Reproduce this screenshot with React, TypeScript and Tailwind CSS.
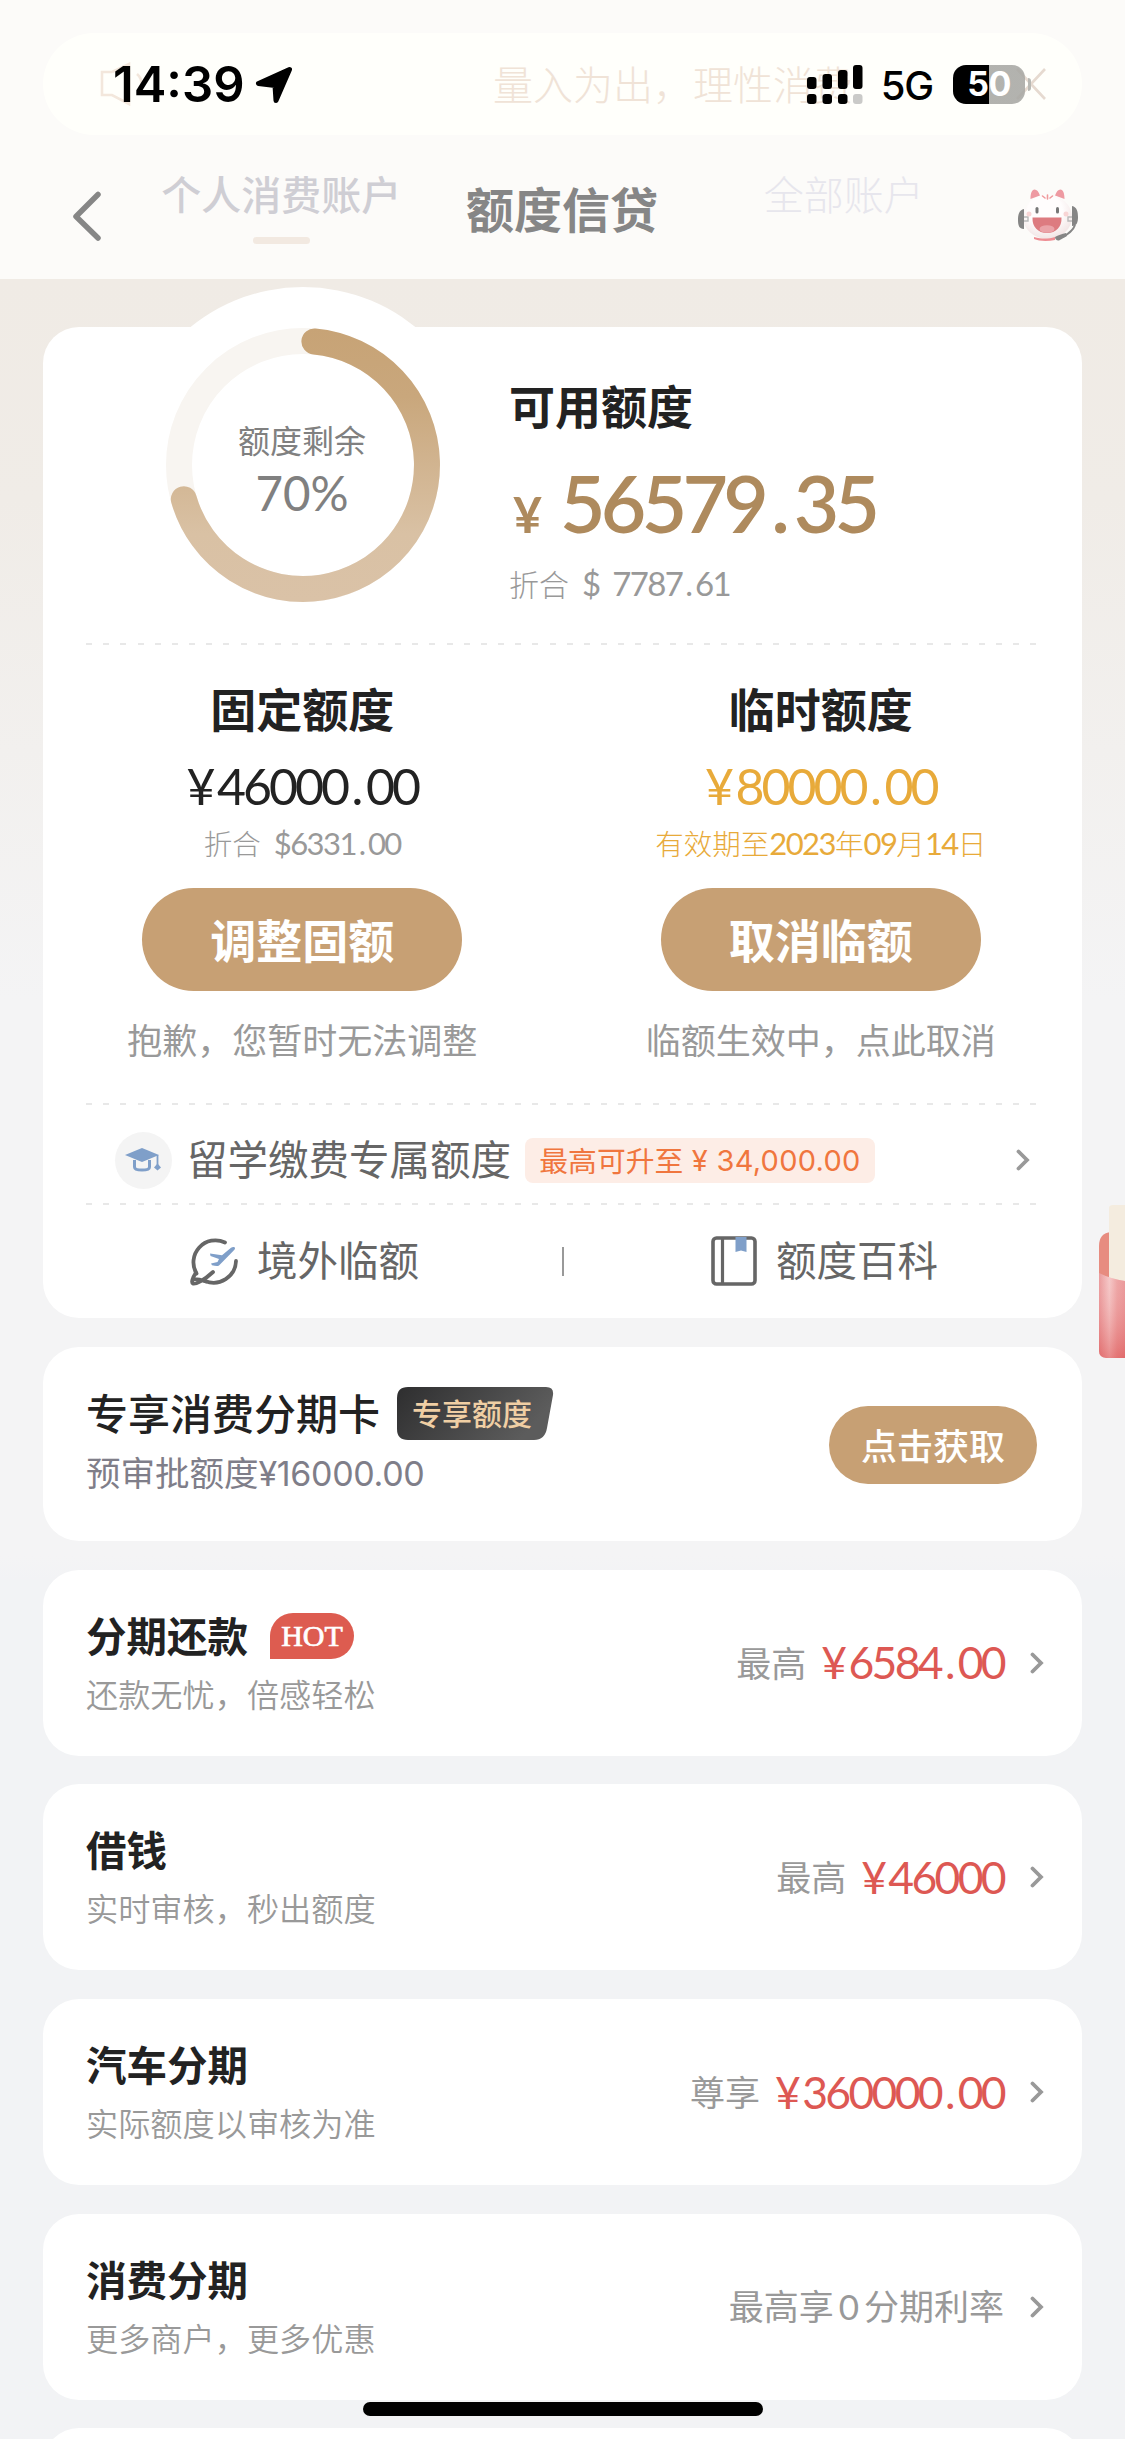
import React from 'react';
import clsx from 'clsx';

interface MoneyProps {
  value: string;
  className?: string;
  tracking?: string;
}

// Digits are set tight, with extra room after the currency sign and around the decimal point.
const Money: React.FC<MoneyProps> = ({ value, className, tracking = 'tracking-[-0.06em]' }) => {
  const hasYen = value.length > 1 && value.startsWith('¥');
  const [whole, fraction] = (hasYen ? value.slice(1) : value).split('.');
  return (
    <span className={clsx("font-['Lato','Noto_Sans_CJK_SC',sans-serif]", tracking, className)}>
      {hasYen && <span className="mr-[0.09em]">¥</span>}
      {whole}
      {fraction && <span className="ml-[0.09em] mr-[0.11em]">.</span>}
      {fraction}
    </span>
  );
};

const Chevron = () => (
  <svg className="h-[22px] w-[14px]" viewBox="0 0 14 22" fill="none">
    <path d="M2.5 2.5 11 11l-8.5 8.5" stroke="#999" strokeWidth="3.8" strokeLinecap="round" />
  </svg>
);

const Dashes = () => (
  <div className="mx-[43px] h-[2px] bg-[repeating-linear-gradient(90deg,#e8e8e8_0_6px,transparent_6px_17.17px)]" />
);

const CatIcon = () => (
  <svg className="h-[52px] w-[62px]" viewBox="0 0 62 52">
    <defs>
      <radialGradient id="face" cx="0.45" cy="0.35" r="0.7">
        <stop offset="0.5" stopColor="#fffdfd" />
        <stop offset="1" stopColor="#efe0e0" />
      </radialGradient>
    </defs>
    <path d="M13.500 10c0-6 1.500-9.500 4-9.500s4 2 5.500 6zM47.500 10c0-6-1.500-9.500-4-9.500s-4 2-5.500 6z" fill="#ee9aa2" />
    <ellipse cx="30.500" cy="28" rx="24.500" ry="22" fill="url(#face)" />
    <path d="M25.500 7l2.500 2M30.500 6v4M35.500 7l-2.500 2" stroke="#ef9a9c" strokeWidth="1.600" strokeLinecap="round" />
    <path d="M7 20C2 21 1 26 1 31s1 9 6 9zM55 17c5 1 6 6 6 11s-1 9-6 9z" fill="#858585" />
    <path d="M7 28h4v4H7M55 28h-4v4h4" fill="none" stroke="#b9b9b9" strokeWidth="1.4" />
    <path d="M58 36c-2 6-7 9-12 12" fill="none" stroke="#858585" strokeWidth="2" />
    <path d="M38 48c3-2 7-3 11-4l1 3-8 4.500c-2 .5-4-1-4-3.500z" fill="#858585" />
    <path d="M17 48c8 2 14 2 21 0v3c-7 1.300-16 1.300-21-1z" fill="#ee8d93" />
    <rect x="18.500" y="18" width="3" height="6.500" rx="1.500" fill="#777" />
    <rect x="39" y="18" width="3" height="6.500" rx="1.500" fill="#777" />
    <path d="M15.500 28.500h29C45 38 39 44 30 44s-15-6-14.500-15.500z" fill="#dd7b80" />
    <ellipse cx="30" cy="40" rx="7.500" ry="3.800" fill="#eaa3a8" />
    <circle cx="12" cy="25" r="2.500" fill="#f8d5d5" />
    <circle cx="49" cy="25" r="2.500" fill="#f8d5d5" />
  </svg>
);

const GraduationIcon = () => (
  <svg className="h-[24px] w-[37px]" viewBox="0 0 37 24">
    <path d="M0 7 17 0l17 7-17 7z" fill="#7f9fc9" />
    <path d="M9.500 12v7c0 2 2.500 3 7.500 3s7.500-1 7.500-3v-7" fill="none" stroke="#7f9fc9" strokeWidth="3" />
    <path d="M32.500 7v10" stroke="#7f9fc9" strokeWidth="1.800" />
    <path d="m32.500 15.500 3.500 4-3.500 3-3.500-3z" fill="#7f9fc9" />
  </svg>
);

const PlaneIcon = () => (
  <svg className="h-[50px] w-[48px]" viewBox="0 0 48 50" fill="none">
    <path d="M35 6.500A22 22 0 0 0 6.500 37.500" stroke="#666" strokeWidth="3.800" strokeLinecap="round" />
    <path d="M46 25A22.500 22.500 0 0 1 15 45" stroke="#666" strokeWidth="3.800" strokeLinecap="round" />
    <path d="M6 36.500c-3.500 5.500-5 10-3 11s11-3 20-11.500M3 43.500c3-1 8 .5 13 2" stroke="#666" strokeWidth="3.800" strokeLinecap="round" strokeLinejoin="round" />
    <path d="m20 17.500 12 1.800 9-7.500c1.500-1.300 4.500-1.300 4 .8-.3 1.200-1 1.800-2 2.700L29 29.500c-1.500 1-4 .5-7-.2l-1-1.700 6.500-1.500 1.500-3-8.500-3z" fill="#7f9fc9" />
  </svg>
);

const BookIcon = () => (
  <svg className="h-[50px] w-[46px]" viewBox="0 0 46 50" fill="none">
    <rect x="2" y="2" width="42" height="46" rx="3.500" stroke="#666" strokeWidth="3.600" />
    <path d="M11.500 2v46" stroke="#666" strokeWidth="3.200" />
    <path d="M24.500 1h11v15l-5.500-1.500-5.500 1.500z" fill="#7f9fc9" />
  </svg>
);

const StatusBar = () => (
  <div className="relative flex h-[64px] items-center justify-between pl-[113px] pr-[94px] text-black">
    <div className="flex items-center">
      <span className="font-['Inter',sans-serif] text-[49px] font-semibold leading-none">14:39</span>
      <svg className="ml-[10px] mt-[2px] h-[38px] w-[38px]" viewBox="0 0 38 38" fill="#000">
        <path d="M34.500 3.500 3.500 17.500 20 19.500 21 34.500z" stroke="#000" strokeWidth="5" strokeLinejoin="round" />
      </svg>
    </div>
    <div className="flex items-center">
      <svg className="h-[41px] w-[56px]" viewBox="0 0 56 41">
        <rect x="0" y="13" width="9.500" height="12" rx="3" />
        <rect x="15.500" y="10" width="9.500" height="15" rx="3" />
        <rect x="31" y="6" width="9.500" height="19" rx="3" />
        <rect x="46" y="1" width="9.500" height="24" rx="3" />
        <rect x="0" y="30" width="9.500" height="10" rx="3" />
        <rect x="15.500" y="30" width="9.500" height="10" rx="3" />
        <rect x="31" y="30" width="9.500" height="10" rx="3" />
        <rect x="46" y="30" width="9.500" height="10" rx="3" fill="#cacac8" />
      </svg>
      <span className="ml-[18px] mt-[3px] font-['Inter',sans-serif] text-[40px] font-medium leading-none tracking-[-0.03em]">5G</span>
      <div className="ml-[20px] flex h-[39px] w-[72px] items-center justify-center rounded-[13px] bg-[linear-gradient(90deg,#000_50%,#a8a8a4e0_50%)]">
        <span className="font-['Inter',sans-serif] text-[34px] font-bold leading-none tracking-[-0.02em] text-white">50</span>
      </div>
      <div className="ml-[3px] h-[13px] w-[3px] rounded-r-full bg-[#b9b9b4]" />
    </div>
  </div>
);

const Header = () => (
  <header className="relative h-[279px] bg-[#fcfbf9]">
    {/* scrolled content showing faintly through the bar */}
    <div className="absolute inset-0 pt-[33px]">
      <div className="mx-[43px] flex h-[102px] items-center rounded-full bg-[#fffffb] pl-[57px] pr-[36px]">
        <svg className="h-[44px] w-[48px]" viewBox="0 0 48 44" fill="none" stroke="#f3e7dc" strokeWidth="2.600">
          <path d="M12 10H2v23h10l17 9V2L12 10M37 12c6 5 6 15 0 20" />
        </svg>
        <span className="ml-[345px] flex-1 pb-[2px] text-[40px] font-light leading-none text-[#f0e3d7]">量入为出，理性消费</span>
        <svg className="h-[32px] w-[30px]" viewBox="0 0 30 32" stroke="#e6dad0" strokeWidth="2.600">
          <path d="m1 1 28 30M29 1 1 31" />
        </svg>
      </div>
      <div className="mt-[38px] grid grid-cols-2 text-center text-[40px] leading-[40px]">
        <div className="font-medium text-[#cfced4]">
          个人消费账户
          <div className="mx-auto mt-[24px] h-[7px] w-[57px] rounded-full bg-[#f2e9e1]" />
        </div>
        <div className="font-light text-[#e7e6ed]">全部账户</div>
      </div>
    </div>
    <div className="relative pt-[52px]">
      <StatusBar />
      <nav className="mt-[45px] flex items-center justify-between pl-[72px] pr-[46px]">
        <svg className="mt-[24px] h-[50px] w-[30px]" viewBox="0 0 30 50" fill="none">
          <path d="M26 3.500 4 25.500l22 21.500" stroke="#868686" strokeWidth="5.500" strokeLinecap="round" strokeLinejoin="round" />
        </svg>
        <h1 className="ml-[5px] mt-[6px] text-[48px] font-bold leading-[80px] text-[#868686]">额度信贷</h1>
        <div className="mt-[22px]">
          <CatIcon />
        </div>
      </nav>
    </div>
  </header>
);

const QuotaRing = () => (
  <div className="relative ml-[123px] mt-[1px] h-[274px] w-[274px]">
    <div className="absolute -inset-[41px] rounded-full bg-white" />
    <svg className="absolute inset-0" viewBox="0 0 274 274" fill="none">
      <defs>
        <linearGradient id="ring" x1="0" y1="0" x2="0" y2="274" gradientUnits="userSpaceOnUse">
          <stop offset="0" stopColor="#c7a376" />
          <stop offset="0.25" stopColor="#c9a77c" />
          <stop offset="0.75" stopColor="#d9c1a4" />
          <stop offset="1" stopColor="#dac2a7" />
        </linearGradient>
      </defs>
      <circle cx="137" cy="137" r="124" stroke="#f8f5f1" strokeWidth="26" />
      <path d="M148.400 13.500A124 124 0 1 1 17.800 171.200" stroke="url(#ring)" strokeWidth="26" strokeLinecap="round" />
    </svg>
    <div className="relative flex flex-col items-center pr-[2px] pt-[93px] text-[#808080]">
      <span className="text-[32px] leading-[36px]">额度剩余</span>
      <Money value="70%" tracking="tracking-normal" className="mt-[9px] text-[47.5px] leading-[54px]" />
    </div>
  </div>
);

interface QuotaColumnProps {
  title: string;
  amount: string;
  note: React.ReactNode;
  action: string;
  hint: string;
  active?: boolean;
}

const QuotaColumn: React.FC<QuotaColumnProps> = ({ title, amount, note, action, hint, active }) => (
  <div className="flex flex-col items-center">
    <h2 className="text-[46px] font-bold leading-[60px] text-[#222]">{title}</h2>
    <Money
      value={amount}
      className={clsx('mt-[21px] text-[50px] leading-[56px]', active ? 'text-[#e8aa3a]' : 'text-[#222]')}
    />
    <p className={clsx('mt-[11px] text-[28.5px] font-light leading-[36px]', active ? 'text-[#e8aa3a]' : 'text-[#999]')}>
      {note}
    </p>
    <button className="mt-[27px] h-[103px] w-[320px] rounded-full bg-[#c7a074] pb-[2px] text-[46px] font-bold text-white">
      {action}
    </button>
    <p className="mt-[26px] text-[35px] leading-[44px] text-[#999]">{hint}</p>
  </div>
);

const QuotaCard = () => (
  <section className="mx-[43px] h-[991px] rounded-[36px] bg-white">
    <div className="flex h-[316px]">
      <QuotaRing />
      <div className="relative ml-[69px] pt-[47px]">
        <h2 className="text-[46px] font-bold leading-[60px] text-[#222]">可用额度</h2>
        <div className="mt-[31px] flex items-baseline text-[#ae8a5d]">
          <Money value="¥" className="ml-[4px] text-[50px] font-bold" />
          <Money value="56579.35" className="ml-[21px] text-[78.5px] font-semibold leading-[76px]" />
        </div>
        <p className="mt-[11px] text-[30px] font-light leading-[40px] text-[#999]">
          折合<Money value="$ 7787.61" tracking="tracking-[-0.05em]" className="ml-[13px] text-[33px] font-normal [word-spacing:6px]" />
        </p>
      </div>
    </div>
    <Dashes />
    <div className="mt-[32px] grid grid-cols-2 pr-[2px]">
      <QuotaColumn
        title="固定额度"
        amount="¥46000.00"
        note={
          <>
            折合<Money value="$6331.00" tracking="tracking-[-0.05em]" className="ml-[13px] text-[31px] font-normal" />
          </>
        }
        action="调整固额"
        hint="抱歉，您暂时无法调整"
      />
      <QuotaColumn
        title="临时额度"
        amount="¥80000.00"
        note={
          <>
            有效期至<Money value="2023" tracking="tracking-[-0.05em]" className="text-[31px] font-normal" />年
            <Money value="09" tracking="tracking-[-0.05em]" className="text-[31px] font-normal" />月
            <Money value="14" tracking="tracking-[-0.05em]" className="text-[31px] font-normal" />日
          </>
        }
        action="取消临额"
        hint="临额生效中，点此取消"
        active
      />
    </div>
    <div className="mt-[42px]">
      <Dashes />
    </div>
    <div className="flex h-[98px] items-center pl-[72px] pr-[52px] pt-[12px]">
      <div className="flex h-[57px] w-[57px] items-center justify-center rounded-full bg-[#f4f4f4]">
        <GraduationIcon />
      </div>
      <span className="ml-[15px] pb-[3px] text-[40.5px] leading-none text-[#666]">留学缴费专属额度</span>
      <span className="ml-[14px] flex h-[45px] w-[350px] items-center justify-center whitespace-pre rounded-[8px] bg-[#fdede6] text-[28.8px] leading-none text-[#f0763e]">
        最高可升至<span className="font-['Inter',sans-serif] text-[29px] tracking-[0.01em]"> ¥ 34,000.00</span>
      </span>
      <div className="ml-auto">
        <Chevron />
      </div>
    </div>
    <Dashes />
    <div className="flex h-[112px] items-center text-[40.5px] leading-none text-[#666]">
      <div className="flex flex-1 items-center justify-center gap-[19px] pl-[4px]">
        <PlaneIcon />
        <span className="pb-[3px]">境外临额</span>
      </div>
      <div className="h-[29px] w-[2px] bg-[#999]" />
      <div className="flex flex-1 items-center justify-center gap-[19px] pl-[3px]">
        <BookIcon />
        <span className="pb-[3px]">额度百科</span>
      </div>
    </div>
  </section>
);

const InstalmentCard = () => (
  <section className="mx-[43px] mt-[29px] flex h-[194px] items-center justify-between rounded-[36px] bg-white pl-[43px] pr-[45px]">
    <div className="-mt-[7px]">
      <div className="flex items-center">
        <h3 className="pb-[3px] text-[42px] font-medium leading-[52px] text-[#222]">专享消费分期卡</h3>
        <div className="relative ml-[17px] flex h-[53px] w-[157px] items-center pb-[3px] pl-[15px]">
          <svg className="absolute inset-0" viewBox="0 0 157 53">
            <defs>
              <linearGradient id="badge" x1="0" y1="0" x2="1" y2="0.3">
                <stop offset="0" stopColor="#2e2e2f" />
                <stop offset="1" stopColor="#5c5c5c" />
              </linearGradient>
            </defs>
            <path d="M11 0h138q8 0 7 8l-6 33q-2 12-13 12H11Q0 53 0 42V11Q0 0 11 0z" fill="url(#badge)" />
          </svg>
          <span className="relative text-[30px] font-medium leading-none text-[#f0cfa4]">专享额度</span>
        </div>
      </div>
      <p className="mt-[8px] text-[34.500px] leading-[44px] text-[#7f7e89]">
        预审批额度<span className="font-['Inter',sans-serif] text-[34px] tracking-[-0.01em]">¥16000.00</span>
      </p>
    </div>
    <button className="mt-[2px] h-[78px] w-[208px] rounded-full bg-[#c7a074] pb-[3px] text-[36px] font-medium text-white">点击获取</button>
  </section>
);

interface Product {
  title: string;
  desc: string;
  label: React.ReactNode;
  amount?: string;
  hot?: boolean;
}

const PRODUCTS: Product[] = [
  { title: '分期还款', desc: '还款无忧，倍感轻松', label: '最高', amount: '¥6584.00', hot: true },
  { title: '借钱', desc: '实时审核，秒出额度', label: '最高', amount: '¥46000' },
  { title: '汽车分期', desc: '实际额度以审核为准', label: '尊享', amount: '¥360000.00' },
  {
    title: '消费分期',
    desc: '更多商户，更多优惠',
    label: (
      <>
        最高享<span className="mx-[5px] font-['Lato',sans-serif]">0</span>分期利率
      </>
    ),
  },
];

const ProductCard: React.FC<{ product: Product }> = ({ product }) => (
  <section className="mx-[43px] mt-[28.700px] flex h-[186px] items-center justify-between rounded-[36px] bg-white pl-[43px] pr-[38px]">
    <div className="pb-[4px]">
      <div className="flex items-center">
        <h3 className="text-[40.500px] font-bold leading-[60px] text-[#222]">{product.title}</h3>
        {product.hot && (
          <span className="ml-[22px] mt-[2px] flex h-[46px] w-[84px] items-center justify-center rounded-[23px] rounded-bl-none bg-[#dd5c50] font-['Liberation_Serif',serif] text-[30px] leading-none text-white [-webkit-text-stroke:0.7px_white]">
            HOT
          </span>
        )}
      </div>
      <p className="mt-[4px] text-[32.200px] font-[350] leading-[48px] text-[#999]">{product.desc}</p>
    </div>
    <div className="flex items-center">
      <span className="pb-[3px] text-[35px] leading-none text-[#999]">{product.label}</span>
      {product.amount && <Money value={product.amount} className="ml-[15px] text-[44.500px] leading-none text-[#dd5853]" />}
      <div className="ml-[26px]">
        <Chevron />
      </div>
    </div>
  </section>
);

const RedPacket = () => (
  <svg className="absolute right-0 top-[1204px] h-[154px] w-[26px]" viewBox="0 0 26 154">
    <defs>
      <linearGradient id="pocket" x1="0" y1="0" x2="1" y2="0">
        <stop offset="0" stopColor="#e58284" />
        <stop offset="0.4" stopColor="#f3bcbc" />
        <stop offset="0.7" stopColor="#ea9090" />
        <stop offset="1" stopColor="#e58082" />
      </linearGradient>
      <linearGradient id="shade" x1="0" y1="0" x2="0" y2="1">
        <stop offset="0" stopColor="#fff" stopOpacity="0.2" />
        <stop offset="1" stopColor="#dd5555" stopOpacity="0.5" />
      </linearGradient>
    </defs>
    <path d="M0 42Q0 29 12 28h14v50H0z" fill="#e78c80" />
    <path d="M10 4q0-3 4-3h12v77H10z" fill="#f4ecdf" />
    <path d="M0 69q12 6 26 8v77H7q-7-1-7-7z" fill="url(#pocket)" />
    <path d="M0 69q12 6 26 8v77H7q-7-1-7-7z" fill="url(#shade)" />
  </svg>
);

export default function App() {
  return (
    <div className="relative h-[2439px] w-[1125px] overflow-hidden bg-[linear-gradient(180deg,#f0ebe5_279px,#f0ece7_500px,#f4f4f5_1000px,#f4f4f5_1556px,#f2f3f5_1580px)] font-['Noto_Sans_CJK_SC',sans-serif]">
      <Header />
      <main className="pt-[48px]">
        <QuotaCard />
        <InstalmentCard />
        {PRODUCTS.map((product) => (
          <ProductCard key={product.title} product={product} />
        ))}
        <div className="mx-[43px] mt-[28.700px] h-[186px] rounded-[36px] bg-white" />
      </main>
      <RedPacket />
      <div className="absolute bottom-[23px] left-[363px] h-[14px] w-[400px] rounded-full bg-black" />
    </div>
  );
}
